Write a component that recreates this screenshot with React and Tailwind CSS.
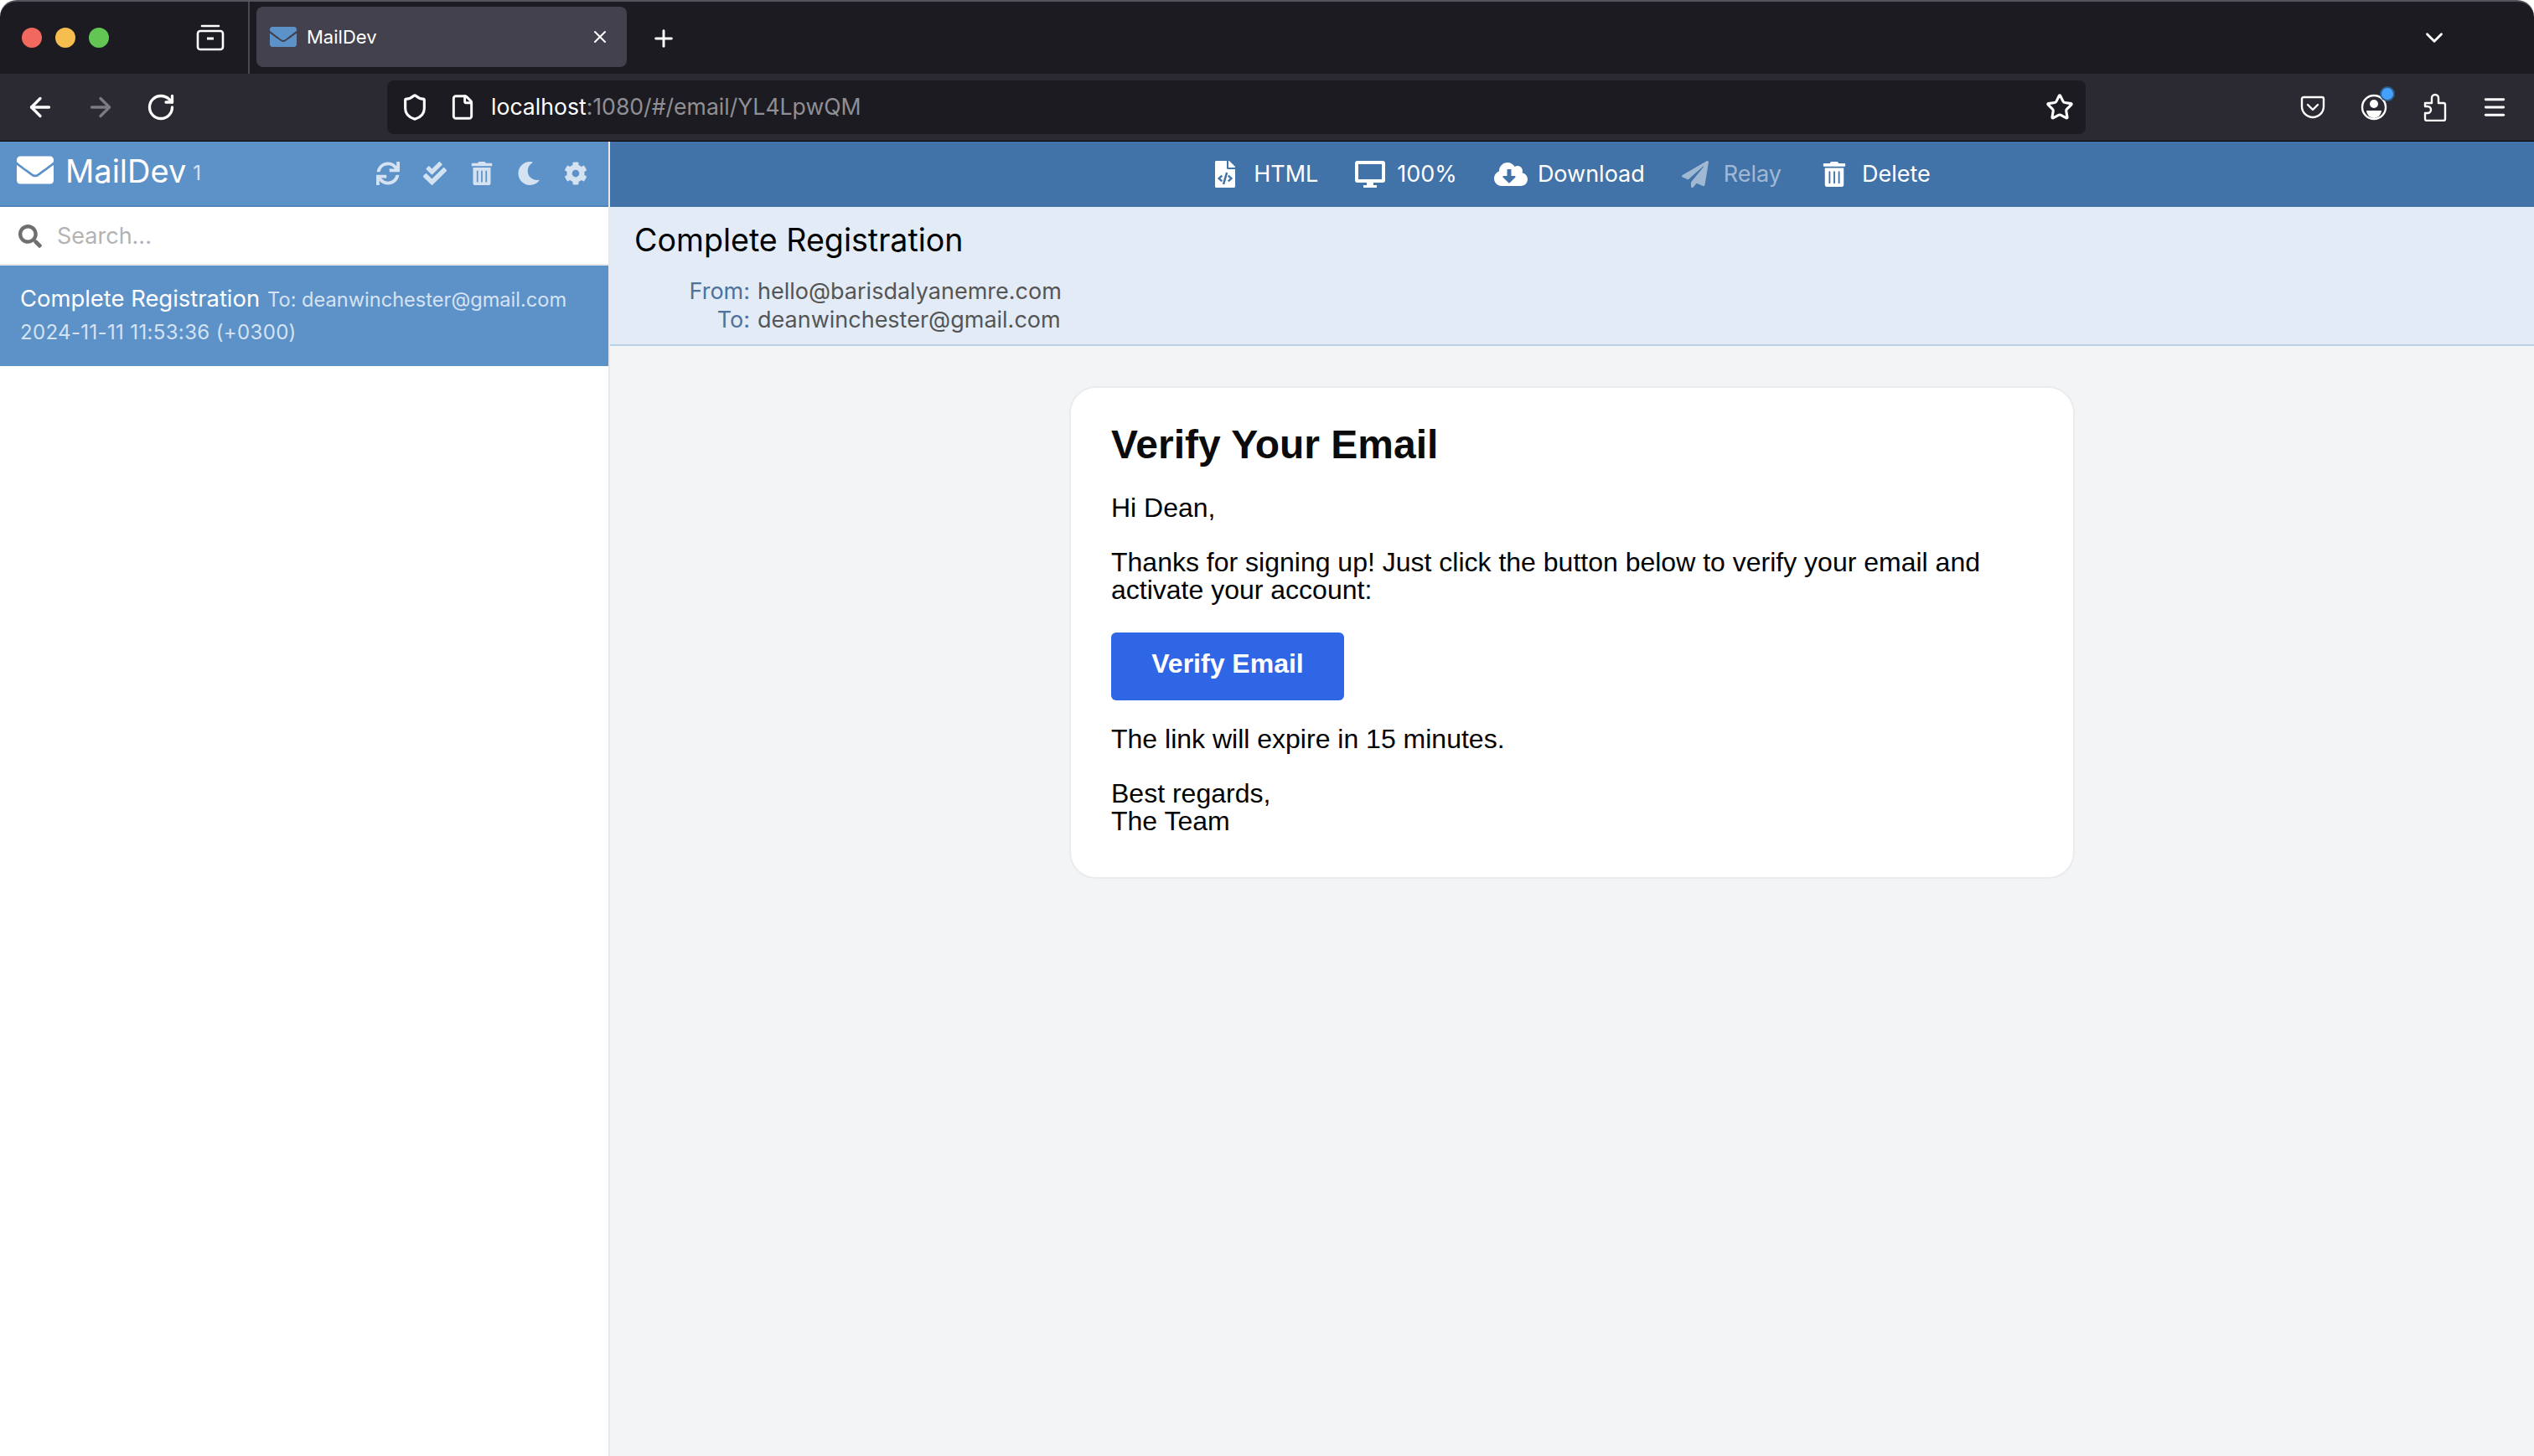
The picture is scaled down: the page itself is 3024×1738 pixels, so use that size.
import {
  ArrowLeft,
  ArrowRight,
  RotateCw,
  Shield,
  File,
  Star,
  Menu,
  ChevronDown,
  Plus,
  X,
} from "lucide-react";
import {
  FaEnvelope,
  FaSync,
  FaCheckDouble,
  FaTrashAlt,
  FaMoon,
  FaCog,
  FaSearch,
  FaFileCode,
  FaCloudDownloadAlt,
  FaPaperPlane,
} from "react-icons/fa";

const sans = "font-['Inter','Noto_Sans',sans-serif]";

function TabsIcon() {
  return (
    <svg width="34" height="32" viewBox="0 0 34 32" fill="none" stroke="white" strokeWidth="2.6">
      <path d="M7 2h20" strokeLinecap="round" />
      <rect x="2" y="8" width="30" height="22" rx="3" />
      <path d="M13 17h8" strokeWidth="3" />
    </svg>
  );
}

function PocketIcon() {
  return (
    <svg width="30" height="30" viewBox="0 0 30 30" fill="none" stroke="white" strokeWidth="2.4" strokeLinecap="round" strokeLinejoin="round">
      <path d="M4 3h22a2 2 0 0 1 2 2v9a13 13 0 0 1-26 0V5a2 2 0 0 1 2-2z" />
      <path d="M9 12l6 6 6-6" />
    </svg>
  );
}

function AccountIcon() {
  return (
    <div className="relative h-[32px] w-[32px]">
      <svg width="32" height="32" viewBox="0 0 32 32" fill="none">
        <circle cx="16" cy="16" r="14" stroke="white" strokeWidth="2.4" />
        <circle cx="16" cy="12" r="5" fill="white" />
        <path d="M7 20h18a9 9 0 0 1-18 0z" fill="white" />
      </svg>
      <div className="absolute -top-[7px] -right-[7px] h-[14px] w-[14px] rounded-full bg-[#45a1ff] ring-2 ring-[#2f5c85]" />
    </div>
  );
}

function PuzzleIcon() {
  return (
    <svg width="30" height="34" viewBox="0 0 30 34" fill="none" stroke="white" strokeWidth="2.4" strokeLinejoin="round">
      <path d="M3 12h8V6a4 4 0 0 1 8 0v6h6a2 2 0 0 1 2 2v17a2 2 0 0 1-2 2H5a2 2 0 0 1-2-2v-7h3a4 4 0 0 0 0-8H3z" />
    </svg>
  );
}

function MonitorIcon() {
  return (
    <svg width="36" height="32" viewBox="0 0 36 32" fill="white" className="-mr-[4px]">
      <path
        fillRule="evenodd"
        d="M3 0h30a3 3 0 0 1 3 3v20a3 3 0 0 1-3 3H22v3h4v3H10v-3h4v-3H3a3 3 0 0 1-3-3V3a3 3 0 0 1 3-3zm1 4v18h28V4z"
      />
    </svg>
  );
}

function ToolbarButton({ icon, label, muted }) {
  return (
    <div className={`flex items-center gap-[18px] ${muted ? "opacity-50" : ""}`}>
      {icon}
      <span>{label}</span>
    </div>
  );
}

export default function App() {
  return (
    <div className={`flex h-[1738px] w-[3024px] flex-col overflow-hidden bg-white ${sans}`}>
      {/* browser chrome */}
      <div className="flex h-[88px] items-start rounded-t-[20px] border-t-2 border-[#55545c] bg-[#1c1b22]">
        <div className="flex h-[86px] w-[298px] items-center border-r-2 border-[#4a4950] pl-[26px]">
          <div className="h-[24px] w-[24px] rounded-full bg-[#f1695e]" />
          <div className="ml-[16px] h-[24px] w-[24px] rounded-full bg-[#f6bd4f]" />
          <div className="ml-[16px] h-[24px] w-[24px] rounded-full bg-[#62c554]" />
          <div className="ml-[104px]">
            <TabsIcon />
          </div>
        </div>
        <div className="mt-[6px] ml-[8px] flex h-[72px] w-[442px] items-center rounded-[8px] bg-[#42414d] pr-[20px] pl-[16px] text-[22px] text-white">
          <FaEnvelope size={32} color="#5d92c9" />
          <span className="ml-[12px]">MailDev</span>
          <X size={24} strokeWidth={2} className="ml-auto" />
        </div>
        <div className="mt-[28px] ml-[28px]">
          <Plus size={32} color="white" strokeWidth={2.2} />
        </div>
        <div className="mt-[26px] mr-[102px] ml-auto">
          <ChevronDown size={34} color="white" strokeWidth={2} />
        </div>
      </div>

      <div className="flex h-[81px] items-center border-b border-black bg-[#2b2a33] pb-[1px]">
        <div className="ml-[30px]">
          <ArrowLeft size={36} color="white" strokeWidth={2.2} />
        </div>
        <div className="ml-[36px]">
          <ArrowRight size={36} color="#7b7a80" strokeWidth={2.2} />
        </div>
        <div className="ml-[36px]">
          <RotateCw size={36} color="white" strokeWidth={2.2} />
        </div>
        <div className="ml-[252px] flex h-[64px] w-[2027px] items-center rounded-[8px] bg-[#1c1b22] pl-[16px] text-[26.6px] text-white">
          <Shield size={34} strokeWidth={2.2} />
          <File size={32} strokeWidth={2.2} className="ml-[24px]" />
          <span className="ml-[18px]">
            localhost<span className="text-[#8f8f94]">:1080/#/email/YL4LpwQM</span>
          </span>
          <Star size={34} strokeWidth={2.2} className="mr-[14px] ml-auto" />
        </div>
        <div className="ml-[256px]">
          <PocketIcon />
        </div>
        <div className="ml-[42px]">
          <AccountIcon />
        </div>
        <div className="ml-[42px]">
          <PuzzleIcon />
        </div>
        <div className="ml-[40px]">
          <Menu size={32} color="white" strokeWidth={2.2} />
        </div>
      </div>

      {/* app */}
      <div className="flex min-h-0 flex-1">
        <aside className="w-[728px] shrink-0 border-r-2 border-[#e5e7eb] bg-white">
          <div className="flex h-[78px] items-center border-b-2 border-[#4f83ba] bg-[#5d92c9] pr-[25px] pl-[20px] text-white">
            <FaEnvelope size={44} className="-mt-[8px]" />
            <span className="ml-[14px] -translate-y-[3px] text-[38px]">MailDev</span>
            <span className="ml-[8px] text-[24px] text-[#d5e2f2]">1</span>
            <div className="ml-auto flex items-center gap-[28px] text-[#d5e2f2]">
              <FaSync size={28} />
              <FaCheckDouble size={28} />
              <FaTrashAlt size={28} />
              <FaMoon size={28} />
              <FaCog size={28} />
            </div>
          </div>
          <div className="flex h-[70px] items-center border-b-2 border-[#e5e7eb] pt-[2px] pl-[22px]">
            <FaSearch size={28} color="#6f6f6f" />
            <span className="ml-[18px] text-[27px] text-[#b3b3b3]">Search...</span>
          </div>
          <div className="h-[120px] bg-[#5d92c9] pt-[22px] pl-[24px]">
            <div className="flex items-baseline text-white">
              <span className="text-[27.4px] leading-[34px]">Complete Registration</span>
              <span className="ml-[9px] text-[23.6px] leading-[34px] text-[#d5e2f2]">
                To: deanwinchester@gmail.com
              </span>
            </div>
            <div className="mt-[5px] text-[24px] leading-[34px] tracking-[0.35px] text-[#d5e2f2]">
              2024-11-11 11:53:36 (+0300)
            </div>
          </div>
        </aside>

        <main className="min-w-0 flex-1 bg-[#f3f4f6]">
          <div className="flex h-[78px] items-center justify-center gap-[44px] bg-[#4172a8] pr-[2px] text-[27px] text-white">
            <ToolbarButton icon={<FaFileCode size={32} />} label="HTML" />
            <ToolbarButton icon={<MonitorIcon />} label="100%" />
            <ToolbarButton icon={<FaCloudDownloadAlt size={40} className="-mr-[6px]" />} label="Download" />
            <ToolbarButton icon={<FaPaperPlane size={32} />} label="Relay" muted />
            <ToolbarButton icon={<FaTrashAlt size={30} className="ml-[4px]" />} label="Delete" />
          </div>
          <div className="h-[166px] border-b-2 border-[#b9d0e6] bg-[#e3ecf6] pl-[29px]">
            <div className="pt-[16px] text-[37.6px] leading-[48px] text-black">Complete Registration</div>
            <div className="mt-[20px] grid grid-cols-[138px_1fr] gap-x-[9px] text-[27px] leading-[34px]">
              <span className="text-right text-[#4d739c]">From:</span>
              <span className="text-[#555]">hello@barisdalyanemre.com</span>
              <span className="text-right text-[#4d739c]">To:</span>
              <span className="text-[#555]">deanwinchester@gmail.com</span>
            </div>
          </div>

          {/* email body */}
          <div className="mx-auto mt-[48px] w-[1200px] rounded-[32px] border-2 border-[#e9ebee] bg-white px-[48px] pt-[40px] pb-[50px] font-['Liberation_Sans',Arial,sans-serif] text-[32px] leading-[33px] text-black">
            <h1 className="text-[48px] leading-[55px] font-bold text-[#0b0b0b]">Verify Your Email</h1>
            <p className="mt-[32px]">Hi Dean,</p>
            <p className="mt-[32px]">
              Thanks for signing up! Just click the button below to verify your email and activate your account:
            </p>
            <div className="mt-[34px] flex h-[81px] w-[278px] justify-center rounded-[6px] bg-[#2f66e6] pt-[21px] font-bold text-white">
              Verify Email
            </div>
            <p className="mt-[30px]">The link will expire in 15 minutes.</p>
            <p className="mt-[32px]">
              Best regards,
              <br />
              The Team
            </p>
          </div>
        </main>
      </div>
    </div>
  );
}
